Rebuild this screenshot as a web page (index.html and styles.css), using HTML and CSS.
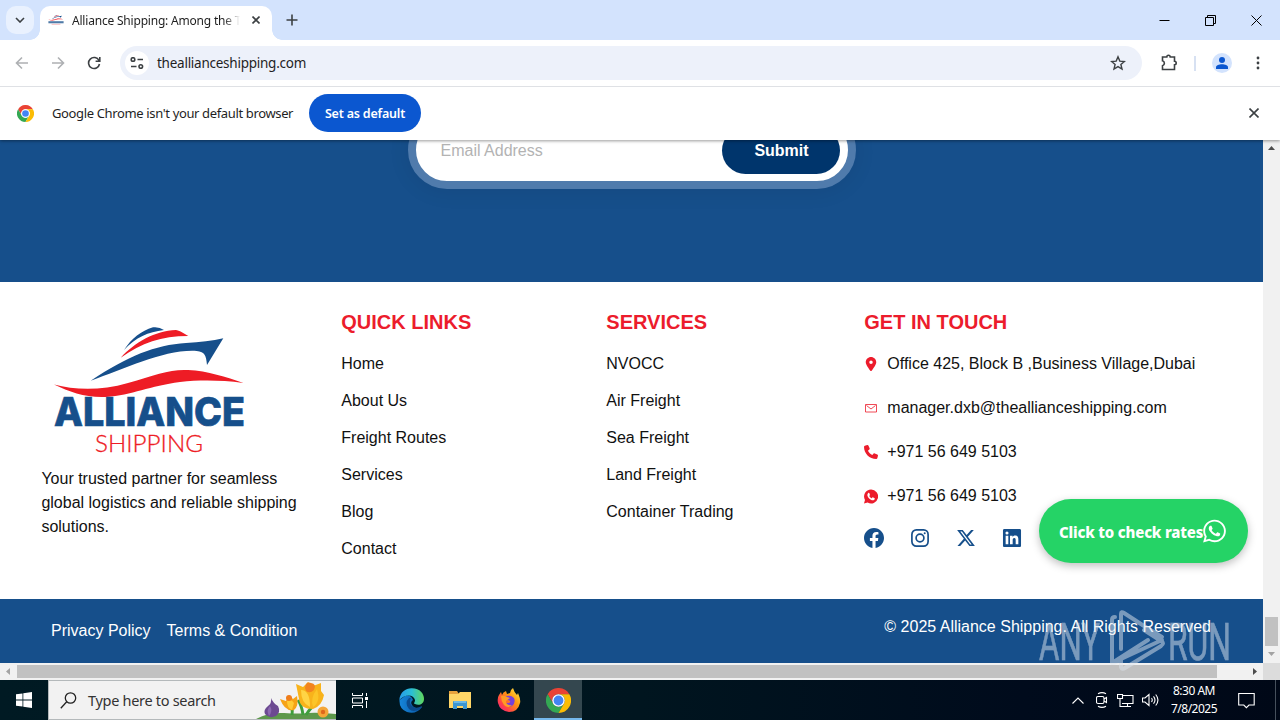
FILE: index.html
```html
<!DOCTYPE html>
<html lang="en">

<head>
    <meta charset="UTF-8">
    <meta name="viewport" content="width=device-width, initial-scale=1.0">
    <title>Alliance Shipping</title>
    <link rel="stylesheet" href="styles.css">
</head>

<body>

    <!-- shared icons -->
    <svg class="sprite" width="0" height="0">
        <symbol id="chrome" viewBox="0 0 24 24">
            <path fill="#ea4335" d="M1.6 6A12 12 0 0 1 22.4 6H12A6 6 0 0 0 6.8 15Z"/>
            <path fill="#34a853" d="M1.6 6L6.8 15A6 6 0 0 0 17.2 15L12 24A12 12 0 0 1 1.6 6Z"/>
            <path fill="#fbbc04" d="M12 24L17.2 15A6 6 0 0 0 12 6H22.4A12 12 0 0 1 12 24Z"/>
            <circle cx="12" cy="12" r="6" fill="#fff"/>
            <circle cx="12" cy="12" r="4.7" fill="#4285f4"/>
        </symbol>
        <symbol id="ship" viewBox="0 0 200 76">
            <path fill="#164f8b" d="M74 25C82 13 91 6 103 2.300Q109 1.500 114 5C98 7 86 12 74 25Z"/>
            <path fill="#ee1c25" d="M70.700 32.700C85 17 105 6 126 5Q129 5 138.300 11C111 11 92 18 70.700 32.700Z"/>
            <path fill="#164f8b" d="M40.700 55.700C78 31 105 20 136 18Q157 17 173.300 13.300L157 40C156 30 155 27 146.700 26C115 24 75 44 40.700 55.700Z"/>
            <path fill="#ee1c25" d="M4 59.500C25 65 50 66 78 58C105 50 120 44 138 45C158 46 176 52 193.500 58C170 55 150 55 130 57C100 61 82 70 56 72C36 73 20 67 4 59.500Z"/>
        </symbol>
    </svg>

    <header class="browser">
        <div class="tabstrip">
            <div class="tab-search"><svg width="10" height="6" viewBox="0 0 10 6"><path d="M1 1l4 4 4-4"/></svg></div>
            <div class="tab">
                <svg class="favicon" viewBox="0 0 200 130">
                    <use href="#ship" width="200" height="76"/>
                    <rect x="5" y="80" width="190" height="26" fill="#164f8b" opacity=".75"/>
                    <rect x="45" y="114" width="110" height="8" fill="#ee1c25" opacity=".4"/>
                </svg>
                <span class="tab-title">Alliance Shipping: Among the T</span>
                <svg class="tab-close" width="8" height="8" viewBox="0 0 8 8"><path d="M.5.500l7 7M7.500.500l-7 7"/></svg>
            </div>
            <svg class="new-tab" width="12" height="12" viewBox="0 0 12 12"><path d="M6 .500v11M.5 6h11"/></svg>
            <div class="window-controls">
                <svg width="11" height="11" viewBox="0 0 11 11"><path d="M.5 5.500h10"/></svg>
                <svg width="11" height="11" viewBox="0 0 11 11"><path d="M.5 2.500h8v8h-8zM2.500 2.500v-2h8v8h-2"/></svg>
                <svg width="11" height="11" viewBox="0 0 11 11"><path d="M.5.500l10 10M10.500.500l-10 10"/></svg>
            </div>
        </div>

        <div class="toolbar">
            <div class="nav">
                <svg class="disabled" width="14" height="14" viewBox="0 0 14 14"><path d="M13 7H2M7 1.500L1.500 7 7 12.500"/></svg>
                <svg class="disabled" width="14" height="14" viewBox="0 0 14 14"><path d="M1 7h11M7 1.500L12.500 7 7 12.500"/></svg>
                <svg width="14" height="14" viewBox="0 0 14 14"><path d="M12 4.500A5.500 5.500 0 1 0 12.500 8M12.800 1v4.200H8.600"/></svg>
            </div>
            <div class="address">
                <div class="site-info">
                    <svg width="14" height="12" viewBox="0 0 14 12"><circle cx="3" cy="2.500" r="1.800"/><path d="M7.500 2.500H13M1 9.500h5.500"/><circle cx="10.800" cy="9.500" r="1.800"/></svg>
                </div>
                <span class="url">theallianceshipping.com</span>
                <svg class="star" width="16" height="16" viewBox="0 0 16 16"><path d="M8 1.800l1.800 4.300 4.600.4-3.500 3 1.100 4.500L8 11.600 4 14l1.100-4.500-3.500-3 4.600-.4z"/></svg>
            </div>
            <div class="tools">
                <svg width="18" height="18" viewBox="0 0 18 18"><path d="M2.500 3h4.300a1.700 1.700 0 0 1 3.400 0H14.500v4.300a1.700 1.700 0 0 1 0 3.400V15.500H2.500V11.800a2.600 2.600 0 0 0 0-5Z"/></svg>
                <span class="divider"></span>
                <div class="avatar"><svg width="12" height="12" viewBox="0 0 12 12"><circle cx="6" cy="3" r="3"/><path d="M0 12V10.300C0 8.500 3 7.300 6 7.300s6 1.200 6 3V12Z"/></svg></div>
                <svg class="menu" width="4" height="14" viewBox="0 0 4 14"><circle cx="2" cy="2" r="1.400"/><circle cx="2" cy="7" r="1.400"/><circle cx="2" cy="12" r="1.400"/></svg>
            </div>
        </div>

        <div class="infobar">
            <svg width="17" height="17"><use href="#chrome"/></svg>
            <span class="info-text">Google Chrome isn't your default browser</span>
            <button class="default-btn">Set as default</button>
            <svg class="info-close" width="10" height="10" viewBox="0 0 10 10"><path d="M.5.500l9 9M9.500.500l-9 9"/></svg>
        </div>
    </header>

    <main class="viewport">
        <div class="page">
            <section class="newsletter">
                <div class="subscribe">
                    <span class="placeholder">Email Address</span>
                    <button class="submit">Submit</button>
                </div>
            </section>

            <footer class="footer">
                <div class="brand">
                    <svg class="logo" width="200" height="132" viewBox="0 0 200 132">
                        <use href="#ship" width="200" height="76"/>
                        <text class="logo-name" x="4" y="100.500" textLength="191" lengthAdjust="spacingAndGlyphs">ALLIANCE</text>
                        <text class="logo-sub" x="45" y="127" textLength="108" lengthAdjust="spacingAndGlyphs">SHIPPING</text>
                    </svg>
                    <p>Your trusted partner for seamless global logistics and reliable shipping solutions.</p>
                </div>
                <div class="links">
                    <h2>QUICK LINKS</h2>
                    <ul>
                        <li>Home</li>
                        <li>About Us</li>
                        <li>Freight Routes</li>
                        <li>Services</li>
                        <li>Blog</li>
                        <li>Contact</li>
                    </ul>
                </div>
                <div class="links">
                    <h2>SERVICES</h2>
                    <ul>
                        <li>NVOCC</li>
                        <li>Air Freight</li>
                        <li>Sea Freight</li>
                        <li>Land Freight</li>
                        <li>Container Trading</li>
                    </ul>
                </div>
                <div class="contact">
                    <h2>GET IN TOUCH</h2>
                    <ul>
                        <li>
                            <svg width="14" height="14" viewBox="-64 0 512 512"><path d="M215.700 499.200C267 435 384 279.400 384 192C384 86 298 0 192 0S0 86 0 192c0 87.400 117 243 168.300 307.200c12.300 15.300 35.100 15.300 47.400 0zM192 128a64 64 0 1 1 0 128 64 64 0 1 1 0-128z"/></svg>
                            <span>Office 425, Block B ,Business Village,Dubai</span>
                        </li>
                        <li>
                            <svg class="mail" width="14" height="14" viewBox="0 0 14 14"><path d="M1.500 3.500h11v7.500h-11zM2.500 4.500L7 8l4.500-3.500"/></svg>
                            <span>manager.dxb@theallianceshipping.com</span>
                        </li>
                        <li>
                            <svg width="14" height="14" viewBox="0 0 512 512"><path d="M164.900 24.600c-7.700-18.600-28-28.500-47.400-23.200l-88 24C12.100 30.200 0 46 0 64C0 311.400 200.600 512 448 512c18 0 33.800-12.100 38.600-29.500l24-88c5.300-19.400-4.600-39.700-23.200-47.400l-96-40c-16.300-6.800-35.200-2.100-46.300 11.600L304.700 368C234.300 334.700 177.300 277.700 144 207.300L193.300 167c13.700-11.200 18.400-30 11.600-46.300l-40-96z"/></svg>
                            <span>+971 56 649 5103</span>
                        </li>
                        <li>
                            <svg width="15" height="15" viewBox="0 0 24 24"><path d="M12 0A12 12 0 0 0 1.700 18L0 24l6.200-1.600A12 12 0 1 0 12 0Z"/><path fill="#fff" d="M8.500 5.700c-.6 0-2.700 1-2.700 3.600 0 4 5.400 9.200 9.300 9.200 2.100 0 3.500-1.300 3.500-3.100 0-.7-3.200-2.200-3.700-2.200-.7 0-1.300 1.900-2 1.900-.8 0-3.900-2.700-3.900-3.800 0-.6 1.200-1.300 1.200-2 0-.5-1.100-3.600-1.700-3.600Z"/></svg>
                            <span>+971 56 649 5103</span>
                        </li>
                    </ul>
                    <div class="social">
                        <svg width="20" height="20" viewBox="0 0 24 24"><path d="M24 12.073c0-6.627-5.373-12-12-12s-12 5.373-12 12c0 5.990 4.388 10.954 10.125 11.854v-8.385H7.078v-3.470h3.047V9.430c0-3.007 1.792-4.669 4.533-4.669 1.312 0 2.686.235 2.686.235v2.953H15.830c-1.491 0-1.956.925-1.956 1.874v2.250h3.328l-.532 3.470h-2.796v8.385C19.612 23.027 24 18.062 24 12.073z"/></svg>
                        <svg class="outline" width="20" height="20" viewBox="0 0 20 20"><rect x="1.900" y="1.900" width="16.200" height="16.200" rx="4.500"/><circle cx="10" cy="10" r="3.900"/><circle class="dot" cx="14.700" cy="5.300" r="1"/></svg>
                        <svg width="20" height="20" viewBox="-1.500 -1.500 27 27"><path d="M18.901 1.153h3.680l-8.040 9.190L24 22.846h-7.406l-5.800-7.584-6.638 7.584H.474l8.600-9.830L0 1.154h7.594l5.243 6.932ZM17.610 20.644h2.039L6.486 3.240H4.298Z"/></svg>
                        <svg width="20" height="20" viewBox="-1.300 -1.300 26.600 26.600"><path d="M20.447 20.452h-3.554v-5.569c0-1.328-.027-3.037-1.852-3.037-1.853 0-2.136 1.445-2.136 2.939v5.667H9.351V9h3.414v1.561h.046c.477-.9 1.637-1.850 3.370-1.850 3.601 0 4.267 2.370 4.267 5.455v6.286zM5.337 7.433a2.062 2.062 0 0 1-2.063-2.065 2.064 2.064 0 1 1 2.063 2.065zm1.782 13.019H3.555V9h3.564v11.452zM22.225 0H1.771C.792 0 0 .774 0 1.729v20.542C0 23.227.792 24 1.771 24h20.451C23.200 24 24 23.227 24 22.271V1.729C24 .774 23.200 0 22.222 0h.003z"/></svg>
                    </div>
                </div>
            </footer>

            <div class="bottom">
                <div class="legal">
                    <span>Privacy Policy</span>
                    <span>Terms &amp; Condition</span>
                </div>
                <p class="copyright">© 2025 Alliance Shipping. All Rights Reserved</p>
            </div>

            <div class="rates">
                <span>Click to check rates</span>
                <svg width="23" height="26" viewBox="0 0 448 512"><path d="M380.900 97.100C339 55.100 283.200 32 223.900 32c-122.400 0-222 99.600-222 222 0 39.100 10.200 77.300 29.600 111L0 480l117.700-30.900c32.400 17.700 68.900 27 106.100 27h.1c122.300 0 224.100-99.600 224.100-222 0-59.300-25.200-115-67.100-157zm-157 341.600c-33.200 0-65.700-8.900-94-25.700l-6.700-4-69.800 18.300L72 359.200l-4.400-7c-18.500-29.400-28.200-63.300-28.200-98.200 0-101.700 82.800-184.500 184.600-184.500 49.300 0 95.600 19.200 130.400 54.100 34.800 34.900 56.200 81.200 56.100 130.500 0 101.800-84.900 184.600-186.600 184.600zm101.200-138.200c-5.500-2.800-32.800-16.200-37.900-18-5.100-1.900-8.800-2.800-12.500 2.800-3.700 5.600-14.300 18-17.600 21.800-3.200 3.700-6.500 4.200-12 1.400-32.600-16.300-54-29.100-75.500-66-5.700-9.800 5.700-9.100 16.300-30.300 1.800-3.700.9-6.900-.5-9.700-1.400-2.800-12.500-30.100-17.100-41.200-4.500-10.800-9.100-9.300-12.500-9.500-3.200-.2-6.900-.2-10.600-.2-3.700 0-9.700 1.400-14.800 6.900-5.100 5.600-19.400 19-19.400 46.300 0 27.300 19.900 53.700 22.600 57.400 2.800 3.700 39.100 59.700 94.800 83.800 35.200 15.200 49 16.500 66.600 13.900 10.700-1.600 32.800-13.400 37.400-26.400 4.600-13 4.600-24.100 3.200-26.400-1.300-2.500-5-3.900-10.500-6.600z"/></svg>
            </div>
        </div>

        <div class="scroll-y">
            <svg width="7" height="4" viewBox="0 0 7 4"><path d="M0 4L3.500 0 7 4z"/></svg>
            <span class="thumb"></span>
            <svg class="dim" width="7" height="4" viewBox="0 0 7 4"><path d="M0 0h7L3.500 4z"/></svg>
        </div>
        <div class="scroll-x">
            <svg class="dim" width="4" height="7" viewBox="0 0 4 7"><path d="M4 0v7L0 3.500z"/></svg>
            <span class="thumb"></span>
            <svg width="4" height="7" viewBox="0 0 4 7"><path d="M0 0v7l4-3.500z"/></svg>
        </div>
        <div class="corner"></div>
    </main>

    <svg class="watermark" width="196" height="64" viewBox="0 0 196 64">
        <text x="2" y="51" textLength="61" lengthAdjust="spacingAndGlyphs">ANY</text>
        <text x="131" y="51" textLength="63" lengthAdjust="spacingAndGlyphs">RUN</text>
        <path d="M75 54V11q0-3 3-3M84 40V5q0-3 3-1l20 13 18 11M84 20v-4M75 54l36-23M75 54q4 0 9-4l41-19M84 50v8q1 3 4 1l36-22q4-3 0-5L107 21"/>
    </svg>

    <div class="taskbar">
        <div class="start"><svg width="16" height="16" viewBox="0 0 16 16"><path d="M0 2.300L6.500 1.400V7.600H0zM7.300 1.300L16 0v7.600H7.300zM0 8.400h6.500v6.200L0 13.700zM7.300 8.400H16V16l-8.700-1.300z"/></svg></div>
        <div class="search">
            <svg width="17" height="17" viewBox="0 0 17 17"><circle cx="10.500" cy="6" r="5.200"/><path d="M6.700 9.800L.8 16.200"/></svg>
            <span>Type here to search</span>
            <svg class="flowers" width="80" height="38" viewBox="0 0 80 38">
                <path fill="#5d984b" d="M0 38Q12 31 28 32T52 32T80 33V38Z"/>
                <path fill="none" stroke="#3f9e3d" stroke-width="3" d="M36 34Q37 26 34 24M50 34Q55 26 58 25M47 34Q46 25 42 19"/>
                <path fill="#6c4a91" d="M15 17Q17 22 22 25Q25 31 20 35Q13 38 9 33Q7 29 12 25Q16 22 15 17Z"/>
                <path fill="#8b68b0" d="M14 25Q10 29 13 35Q17 30 14 25Z"/>
                <path fill="#f6a316" d="M24 18L30 20L33 14L37 18L41 15Q43 25 38 29Q29 31 24 18Z"/>
                <path fill="#ffcb35" d="M31 20Q35 17 38 22L36 29Q31 27 31 20Z"/>
                <circle cx="33" cy="17" r="3" fill="#ef7d1a"/>
                <path fill="#f8b31b" d="M40 3L47 6L52 1L57 5L65 2L65 10L68 14Q66 25 57 28Q44 28 43 18Z"/>
                <path fill="#ffd445" d="M45 9Q54 9 54 26Q45 22 45 9Z"/>
                <path fill="#fcc528" d="M61 8Q65 21 57 26Q54 17 61 8Z"/>
                <path fill="#f28420" d="M49 7Q50 0 55 2Q61 3 58 9Q54 13 50 10Z"/>
                <circle cx="67" cy="31" r="5.500" fill="#f4a638"/>
                <circle cx="67" cy="31" r="2.200" fill="#df671c"/>
            </svg>
        </div>
        <div class="apps">
            <div class="app">
                <svg class="taskview" width="18" height="17" viewBox="0 0 18 17"><path d="M1.500 1v2.500h10V1M1.500 6h10v5h-10zM1.500 16v-2.500h10V16M15.500 1v3M15.500 9v7"/><path class="solid" d="M14 5h3v3h-3z"/></svg>
            </div>
            <div class="app">
                <svg width="25" height="25" viewBox="0 0 25 25">
                    <defs>
                        <linearGradient id="edgeTop" x1="0" x2="1"><stop offset="0" stop-color="#279bea"/><stop offset=".5" stop-color="#2bbed5"/><stop offset="1" stop-color="#61d85b"/></linearGradient>
                        <linearGradient id="edgeLow" x1="0" x2="1"><stop offset="0" stop-color="#1686da"/><stop offset="1" stop-color="#0955a2"/></linearGradient>
                    </defs>
                    <path fill="url(#edgeLow)" d="M.5 12Q0 21 8 24Q17 27 23 19Q16 22 13 17Q11 14 14 12Q12 6 6 8Z"/>
                    <path fill="#0c4b8d" d="M10 10Q5 15 10 21Q14 25 21 21Q23 20 23 18Q16 22 12 17Q10 14 12 10Z"/>
                    <path fill="url(#edgeTop)" d="M.3 12C1 4 7 0 13 .3C21 .3 25 6 25 11C25 16 20 18 16 16C14 15 16 15 16 12C15 7 7 5 .3 12Z"/>
                </svg>
            </div>
            <div class="app">
                <svg width="22" height="20" viewBox="0 0 22 20">
                    <path fill="#e8a33d" d="M0 1h8l2 3H0z"/><path fill="#ffd667" d="M0 4l9 0 2-2h11v16H0z"/>
                    <path fill="#3c96d2" d="M4 19v-7q0-1 1-1h12q1 0 1 1v7h-4v-3H8v3z"/><path fill="#6bb9e8" d="M5 11h12v2H5z"/>
                </svg>
            </div>
            <div class="app">
                <svg width="24" height="24" viewBox="0 0 24 24">
                    <defs><linearGradient id="fox" x1="1" y1="0" x2="0" y2="1"><stop offset="0" stop-color="#fff050"/><stop offset=".4" stop-color="#ff980f"/><stop offset=".75" stop-color="#ff3d4c"/><stop offset="1" stop-color="#e3259b"/></linearGradient></defs>
                    <path fill="url(#fox)" d="M2 7L4 4L5 7Q6 4 9 3L10 6L13 5Q13 2 16 0Q17 4 20 7L21 5Q24 12 23 15Q21 24 12 24Q3 23 1 15Q0 10 2 7Z"/>
                    <path fill="#7540dc" d="M8 9Q13 6 17 10Q19 15 15 18Q10 20 8 15L12 15Q15 13 11 12L8 11Z"/>
                    <path fill="#ff9b24" d="M4 8Q7 7 10 9L13 10L9 13Q9 18 15 17Q11 21 7 17Q4 13 4 8Z"/>
                </svg>
            </div>
            <div class="app active"><svg width="25" height="25"><use href="#chrome"/></svg></div>
        </div>
        <div class="tray">
            <svg width="12" height="7" viewBox="0 0 12 7"><path d="M.5 6.500L6 1l5.500 5.500"/></svg>
            <svg width="12" height="16" viewBox="0 0 12 16"><rect x=".5" y="4.500" width="7.500" height="7" rx="1.500"/><path d="M8 7l2.500-1.500v5L8 9M2 1.800Q6-.5 10 1.800M2 14.200Q6 16.500 10 14.200"/></svg>
            <svg width="17" height="15" viewBox="0 0 17 15"><path d="M5 2.500h11v8H5M10.500 10.500v3M6 13.500h8M.5 1.500h5v4h-5zM3 5.500v8h3"/></svg>
            <svg width="17" height="14" viewBox="0 0 17 14"><path d="M.5 5h2.500l4-3.500v11L3 9H.5zM9.500 5q1.500 2 0 4M11.500 3.300q3 3.700 0 7.400M13.700 1.500q4.500 5.500 0 11"/></svg>
            <div class="clock"><span>8:30 AM</span><span>7/8/2025</span></div>
            <svg class="notify" width="17" height="17" viewBox="0 0 17 17"><path d="M.7 1.500h15.500v11.500H11l-2.600 2.700L5.800 13H.7z"/></svg>
            <span class="peek"></span>
        </div>
    </div>

</body>

</html>
```
FILE: styles.css
```css
* {
    margin: 0;
    padding: 0;
    box-sizing: border-box;
}

body {
    width: 1280px;
    height: 720px;
    overflow: hidden;
    background: white;
    font-family: "Liberation Sans", Arial, sans-serif;
}

svg {
    display: block;
    flex-shrink: 0;
}

.sprite {
    position: absolute;
}

ul {
    list-style: none;
}

button {
    border: none;
    font-family: inherit;
}

/* browser window */
.browser {
    position: relative;
    z-index: 2;
    height: 140px;
    background: white;
    font-family: "Noto Sans", sans-serif;
    color: #1f1f1f;
    box-shadow: 0 1px 3px rgba(0, 0, 0, 0.4);
}

.browser svg path,
.site-info circle {
    stroke-width: 1.6;
}

.tabstrip {
    display: flex;
    align-items: center;
    height: 40px;
    padding-left: 6px;
    background: #d3e3fd;
}

.tab-search {
    display: flex;
    align-items: center;
    justify-content: center;
    width: 28px;
    height: 28px;
    margin-right: 6px;
    border-radius: 10px;
    background: #e9f1fe;
}

.tab-search svg,
.tab-close,
.new-tab,
.nav svg,
.site-info svg,
.star,
.info-close,
.window-controls svg {
    fill: none;
    stroke: #3c4043;
}

.tab {
    position: relative;
    display: flex;
    align-items: center;
    align-self: flex-end;
    width: 232px;
    height: 34px;
    padding: 0 12px 6px 8px;
    border-radius: 10px 10px 0 0;
    background: white;
}

/* curved feet of the active tab */
.tab::before,
.tab::after {
    content: "";
    position: absolute;
    bottom: 0;
    width: 10px;
    height: 10px;
}

.tab::before {
    left: -10px;
    background: radial-gradient(circle at 0 0, transparent 9.5px, white 10px);
}

.tab::after {
    right: -10px;
    background: radial-gradient(circle at 100% 0, transparent 9.5px, white 10px);
}

.favicon {
    width: 16px;
    height: 12px;
    margin-right: 8px;
}

.browser .favicon path,
.infobar use {
    stroke: none;
}

.tab-title {
    width: 168px;
    overflow: hidden;
    white-space: nowrap;
    font-size: 12px;
    letter-spacing: -0.2px;
    -webkit-mask-image: linear-gradient(to right, black 152px, transparent);
    mask-image: linear-gradient(to right, black 152px, transparent);
}

.tab-close {
    margin-left: auto;
}

.new-tab {
    margin-left: 14px;
}

.window-controls {
    display: flex;
    gap: 35px;
    margin-left: auto;
    padding-right: 18px;
}

.browser .window-controls path {
    stroke: black;
    stroke-width: 1;
}

.toolbar {
    display: flex;
    align-items: center;
    height: 47px;
    padding: 0 20px 0 15px;
    border-bottom: 1px solid #dfe1e5;
}

.nav {
    display: flex;
    gap: 22px;
    width: 105px;
}

.nav .disabled {
    stroke: #aeb0b3;
}

.address {
    display: flex;
    align-items: center;
    width: 1022px;
    height: 34px;
    padding: 0 16px 0 5px;
    border-radius: 17px;
    background: #edf1fa;
}

.site-info {
    display: flex;
    align-items: center;
    justify-content: center;
    width: 24px;
    height: 24px;
    border-radius: 50%;
    background: white;
}

.url {
    margin-left: 8px;
    font-size: 13.5px;
    letter-spacing: -0.25px;
}

.star {
    margin-left: auto;
}

.browser .star path {
    stroke-width: 1.4;
}

.tools {
    display: flex;
    align-items: center;
    margin-left: 18px;
    flex: 1;
}

.tools > svg:first-child {
    fill: none;
    stroke: #3c4043;
}

.divider {
    width: 2px;
    height: 15px;
    margin: 0 16px;
    background: #d7e1f2;
}

.avatar {
    display: flex;
    align-items: center;
    justify-content: center;
    width: 20px;
    height: 20px;
    border-radius: 50%;
    background: #d3e3fd;
    fill: #0b57d0;
}

.menu {
    margin-left: auto;
    fill: #3c4043;
}

.infobar {
    display: flex;
    align-items: center;
    height: 52px;
    padding: 0 21px 0 17px;
}

.info-text {
    width: 241px;
    margin-left: 18px;
    white-space: nowrap;
    font-size: 13px;
    letter-spacing: -0.36px;
}

.default-btn {
    width: 112px;
    height: 38px;
    margin-left: 16px;
    border-radius: 19px;
    background: #0b57d0;
    color: white;
    font-size: 12.5px;
    font-weight: 600;
    letter-spacing: -0.2px;
}

.info-close {
    margin-left: auto;
}

/* page area with its scrollbars */
.viewport {
    display: grid;
    grid-template-columns: 1263px 17px;
    grid-template-rows: 523px 17px;
}

.page {
    position: relative;
    overflow: hidden;
    background: white;
}

.newsletter {
    display: flex;
    justify-content: center;
    height: 142px;
    background: #164f8b;
}

.subscribe {
    display: flex;
    align-items: center;
    justify-content: space-between;
    width: 448px;
    height: 78px;
    margin-top: -29px;
    padding: 0 8px 0 24px;
    border: 8px solid #507bac;
    border-radius: 39px;
    background: white;
    box-shadow: 0 2px 22px rgba(0, 0, 0, 0.08);
}

.placeholder {
    padding: 2px 0 0 1px;
    color: #b3b3b3;
    font-size: 16px;
}

.submit {
    width: 118px;
    height: 47px;
    padding: 1px 0 0 2px;
    border-radius: 24px;
    background: #00356c;
    color: white;
    font-size: 16px;
    font-weight: bold;
}

.footer {
    display: grid;
    grid-template-columns: 300.3px 265px 258px 1fr;
    height: 317px;
    padding: 26px 20px 0 41px;
    font-size: 16px;
    color: #111;
}

.brand {
    padding-top: 17px;
}

.logo {
    margin-left: 9px;
}

.logo-name {
    fill: #164f8b;
    stroke: #164f8b;
    stroke-width: 0.7;
    font: 800 40px Inter, sans-serif;
}

.logo-sub {
    fill: #ee1c25;
    stroke: #ee1c25;
    stroke-width: 0.3;
    font: 300 24px Lato, sans-serif;
}

.brand p {
    width: 265px;
    margin-top: 10px;
    padding-left: 0.4px;
    line-height: 24px;
}

.footer h2 {
    height: 28px;
    color: #ec1c2c;
    font-size: 20px;
    line-height: 28px;
}

.links ul {
    padding-top: 16px;
}

.links li {
    height: 37px;
    line-height: 24px;
}

.contact ul {
    padding-top: 16px;
}

.contact li {
    display: flex;
    align-items: center;
    gap: 9px;
    height: 24px;
    margin-bottom: 20px;
    white-space: nowrap;
}

.contact li svg {
    width: 14px;
    fill: #ec1c2c;
}

.contact .mail {
    fill: none;
    stroke: #ec1c2c;
    stroke-width: 0.8;
}

.social {
    display: flex;
    gap: 26px;
    fill: #164f8b;
}

.outline {
    fill: none;
    stroke: #164f8b;
    stroke-width: 1.7;
}

.outline .dot {
    fill: #164f8b;
    stroke: none;
}

.bottom {
    display: flex;
    justify-content: space-between;
    height: 64px;
    padding: 0 52px 0 51px;
    background: #164f8b;
    color: white;
    font-size: 16px;
}

.legal {
    display: flex;
    gap: 16px;
    padding-top: 23px;
}

.copyright {
    padding-top: 19px;
}

/* floating whatsapp button */
.rates {
    position: absolute;
    right: 15px;
    bottom: 100px;
    display: flex;
    align-items: center;
    width: 209px;
    height: 64px;
    padding-left: 20px;
    border-radius: 32px;
    background: #25d366;
    color: white;
    fill: white;
    box-shadow: 0 3px 8px rgba(0, 0, 0, 0.25);
    font-family: "Noto Sans", sans-serif;
    font-size: 15px;
    font-weight: 800;
    white-space: nowrap;
}

.rates span {
    width: 144px;
    padding-top: 2px;
    letter-spacing: -0.18px;
}

.scroll-y,
.scroll-x {
    display: flex;
    align-items: center;
    background: #f1f1f1;
    fill: #4d4d4d;
}

.scroll-y {
    flex-direction: column;
    padding: 6px 0 7px;
}

.thumb {
    background: #c1c1c1;
}

.scroll-y .thumb {
    width: 13px;
    height: 29px;
    margin: auto 0 6px;
}

.scroll-x {
    padding: 0 6px;
}

.scroll-x .thumb {
    width: 1200px;
    height: 13px;
    margin: 0 auto 0 7px;
}

.dim {
    fill: #a3a3a3;
}

.corner {
    background: #dcdcdc;
}

.watermark {
    position: absolute;
    left: 1037px;
    top: 609px;
    z-index: 3;
    opacity: 0.5;
    fill: white;
}

.watermark text {
    font: 400 51px Roboto, sans-serif;
    fill: #dde5ee;
    stroke: #dde5ee;
    stroke-width: 0.6;
}

.watermark path {
    fill: none;
    stroke: #dde5ee;
    stroke-width: 4;
    stroke-linecap: round;
}

/* windows taskbar */
.taskbar {
    display: flex;
    height: 40px;
    background: linear-gradient(to right, #001a23, #00151f 50%, #000b1c 80%, #000817);
    color: white;
    font-family: "Noto Sans", sans-serif;
}

.start {
    display: flex;
    align-items: center;
    justify-content: center;
    width: 48px;
    fill: white;
}

.search {
    display: flex;
    align-items: center;
    width: 288px;
    padding-left: 11px;
    border: 1px solid #b4b9bb;
    border-right: none;
    background: #f2f2f2;
    color: #333;
    font-size: 14.5px;
}

.search > svg:first-child {
    fill: none;
    stroke: #222;
    stroke-width: 1.3;
}

.search span {
    margin-left: 11px;
    white-space: nowrap;
    letter-spacing: -0.3px;
}

.flowers {
    margin-left: auto;
}

.apps {
    display: flex;
}

.app {
    display: flex;
    align-items: center;
    justify-content: center;
    width: 48px;
    margin-right: 1px;
}

.app:first-child {
    margin-right: 3px;
}

.active {
    border-bottom: 2px solid #76b9ed;
    padding-top: 2px;
    background: #34474f;
}

.taskview {
    fill: none;
    stroke: white;
}

.taskview .solid {
    fill: white;
    stroke: none;
}

.tray {
    display: flex;
    align-items: center;
    margin-left: auto;
}

.tray svg {
    margin-right: 8px;
    fill: none;
    stroke: white;
    stroke-width: 1.1;
}

.tray svg:first-child {
    margin-right: 12px;
}

.clock {
    display: flex;
    flex-direction: column;
    align-items: center;
    width: 50px;
    margin-left: 2px;
    font-size: 12px;
    line-height: 18px;
    letter-spacing: -0.5px;
}

.tray svg:nth-child(2) {
    margin-right: 9px;
}

.tray .notify {
    margin: 0 20px 0 19px;
}

.peek {
    width: 5px;
    height: 40px;
    border-left: 1px solid #46505c;
}
```
